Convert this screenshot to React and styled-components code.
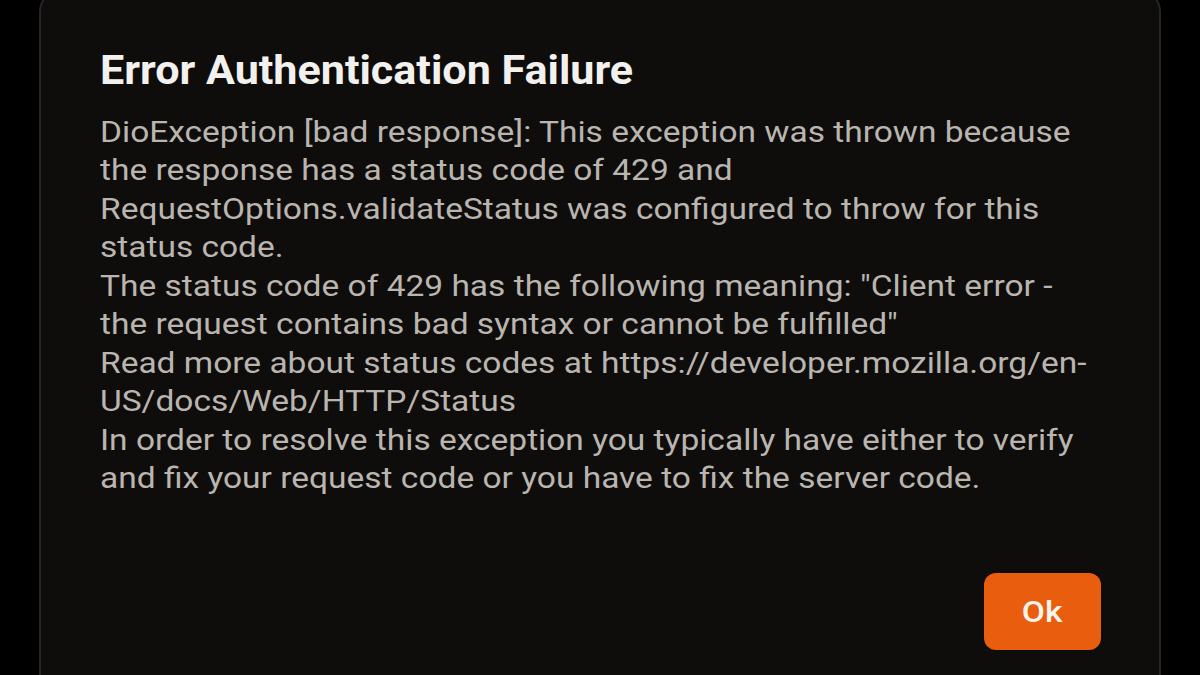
import React from "react";
import styled, { createGlobalStyle } from "styled-components";

const Global = createGlobalStyle`
  html, body { margin: 0; padding: 0; background: #000; }
  body { width: 1200px; height: 675px; overflow: hidden; font-family: Roboto, "Noto Sans", sans-serif; }
`;

const Screen = styled.div`
  width: 1200px;
  height: 675px;
  background: #000;
  padding: 0 39px;
  box-sizing: border-box;
  overflow: hidden;
`;

const Dialog = styled.div`
  margin-top: -12px;
  height: 720px;
  box-sizing: border-box;
  background: #0e0d0c;
  border: 2px solid #262524;
  border-radius: 24px;
  padding: 59px 58px 0 59px;
  display: flex;
  flex-direction: column;
`;

const Title = styled.h1`
  margin: 0;
  font-family: Roboto, sans-serif;
  font-weight: 700;
  font-size: 40px;
  line-height: 44px;
  color: #f3f1ee;
  transform: scaleX(1.077);
  transform-origin: left top;
`;

const Body = styled.div`
  margin-top: 20px;
  font-family: Roboto, sans-serif;
  font-weight: 400;
  font-size: 29px;
  line-height: 38.45px;
  color: #bab5af;
  transform: scaleX(1.155);
  transform-origin: left top;
`;

const Line = styled.div`
  white-space: nowrap;
`;

const Actions = styled.div`
  display: flex;
  justify-content: flex-end;
  margin-top: 75px;
`;

const OkButton = styled.button`
  width: 117px;
  height: 77px;
  border: none;
  border-radius: 12px;
  background: #e85d0e;
  color: #fbf3ec;
  font-family: Roboto, sans-serif;
  font-weight: 500;
  font-size: 30px;
  cursor: pointer;
  padding: 0;
`;

const OkLabel = styled.span`
  display: inline-block;
  transform: scaleX(1.12);
`;

const lines = [
  "DioException [bad response]: This exception was thrown because",
  "the response has a status code of 429 and",
  "RequestOptions.validateStatus was configured to throw for this",
  "status code.",
  "The status code of 429 has the following meaning: \"Client error -",
  "the request contains bad syntax or cannot be fulfilled\"",
  "Read more about status codes at https://developer.mozilla.org/en-",
  "US/docs/Web/HTTP/Status",
  "In order to resolve this exception you typically have either to verify",
  "and fix your request code or you have to fix the server code.",
];

export default function App() {
  return (
    <Screen>
      <Global />
      <Dialog>
        <Title>Error Authentication Failure</Title>
        <Body>
          {lines.map((l, i) => (
            <Line key={i}>{l}</Line>
          ))}
        </Body>
        <Actions>
          <OkButton>
            <OkLabel>Ok</OkLabel>
          </OkButton>
        </Actions>
      </Dialog>
    </Screen>
  );
}
